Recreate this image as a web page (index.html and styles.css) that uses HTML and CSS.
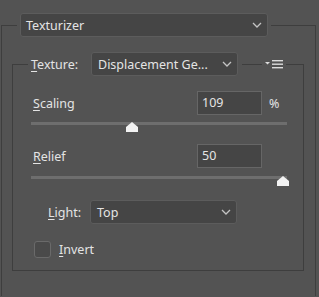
FILE: index.html
```html
<!DOCTYPE html>
<html lang="en">

<head>
    <meta charset="UTF-8">
    <meta name="viewport" content="width=device-width, initial-scale=1.0">
    <title>Texturizer</title>
    <link rel="stylesheet" href="styles.css">
</head>

<body>
    <fieldset class="group group-outer">
        <legend class="group-head head-outer">
            <div class="select select-filter">
                <span>Texturizer</span>
                <svg class="chevron" width="10" height="6" viewBox="0 0 10 6"><path d="M1 1 L5 5 L9 1" /></svg>
            </div>
        </legend>

        <fieldset class="group group-inner">
            <legend class="group-head head-inner">
                <label class="lbl lbl-texture"><u>T</u>exture:</label>
                <div class="select select-texture">
                    <span>Displacement Ge...</span>
                    <svg class="chevron" width="10" height="6" viewBox="0 0 10 6"><path d="M1 1 L5 5 L9 1" /></svg>
                </div>
                <span class="rule"></span>
                <svg class="menu-icon" width="18" height="9" viewBox="0 0 18 9">
                    <polygon points="0,2 5,2 2.5,4.5" />
                    <rect x="7" y="0" width="11" height="1.4" />
                    <rect x="7" y="3.5" width="11" height="1.4" />
                    <rect x="7" y="7" width="11" height="1.4" />
                </svg>
            </legend>

            <div class="field">
                <label class="lbl lbl-field"><u>S</u>caling</label>
                <div class="num">109</div>
                <span class="unit">%</span>
            </div>
            <div class="slider slider-scaling">
                <div class="track"></div>
                <svg class="thumb" style="left: 39.5%" width="12" height="10" viewBox="0 0 12 10"><polygon points="6,0 12,5 12,10 0,10 0,5" /></svg>
            </div>

            <div class="field field-relief">
                <label class="lbl lbl-field"><u>R</u>elief</label>
                <div class="num">50</div>
            </div>
            <div class="slider slider-relief">
                <div class="track"></div>
                <svg class="thumb" style="left: 98.4%" width="12" height="10" viewBox="0 0 12 10"><polygon points="6,0 12,5 12,10 0,10 0,5" /></svg>
            </div>

            <div class="field field-light">
                <label class="lbl lbl-light"><u>L</u>ight:</label>
                <div class="select select-light">
                    <span>Top</span>
                    <svg class="chevron" width="10" height="6" viewBox="0 0 10 6"><path d="M1 1 L5 5 L9 1" /></svg>
                </div>
            </div>

            <div class="check">
                <span class="box"></span>
                <label class="lbl"><u>I</u>nvert</label>
            </div>
        </fieldset>
    </fieldset>
</body>

</html>
```

FILE: styles.css
```css
html,
body {
    margin: 0;
    padding: 0;
    height: 100%;
    overflow: hidden;
    background: #535353;
}

body {
    font-family: "Noto Sans", "Open Sans", sans-serif;
    font-size: 12.5px;
    color: #e4e4e4;
}

u {
    text-decoration-thickness: 1px;
    text-underline-offset: 2px;
}

.group {
    margin: 0;
    border: 1px solid #3e3e3e;
    min-width: 0;
}

.group-head {
    display: flex;
    align-items: center;
    padding: 0 3px;
}

.group-outer {
    margin: 13px 3px 0 1px;
    padding: 15px 11px 25px 10px;
    border-bottom: none;
}

.head-outer {
    margin-left: 5px;
}

.group-inner {
    padding: 15px 16px 12px 18px;
}

.head-inner {
    margin-left: -3px;
}

.select {
    display: flex;
    align-items: center;
    justify-content: space-between;
    box-sizing: border-box;
    height: 24px;
    padding: 0 5px 0 6px;
    background: #454545;
    border: 1px solid #5c5c5c;
    border-radius: 3px;
}

.select-filter {
    width: 248px;
    padding-left: 5px;
}

.select-texture {
    width: 147px;
    margin-left: 10px;
}

.select-light {
    width: 147px;
}

.chevron {
    fill: none;
    stroke: #c4c4c4;
    stroke-width: 1.3;
}

.rule {
    width: 20px;
    height: 1px;
    margin: 0 3px 0 4px;
    background: #3e3e3e;
}

.menu-icon {
    fill: #dcdcdc;
}

.lbl {
    white-space: nowrap;
}

.lbl-texture {
    width: 50px;
}

.field {
    display: flex;
    align-items: center;
    height: 24px;
}

.lbl-field {
    width: 164px;
    padding-left: 2px;
}

.num {
    box-sizing: border-box;
    width: 65px;
    height: 24px;
    line-height: 22px;
    padding-left: 4px;
    background: #454545;
    border: 1px solid #666;
}

.unit {
    margin-left: 7px;
}

.slider {
    position: relative;
    height: 10px;
}

.track {
    height: 3px;
    margin-top: 4px;
    background: #6e6e6e;
}

.thumb {
    position: absolute;
    top: 0;
    margin-left: -6px;
    fill: #f2f2f2;
}

.slider-scaling {
    margin-top: 7px;
}

.field-relief {
    margin-top: 12px;
}

.slider-relief {
    margin-top: 8px;
}

.field-light {
    margin-top: 14px;
}

.lbl-light {
    width: 42px;
    padding-left: 17px;
}

.check {
    display: flex;
    align-items: center;
    gap: 8px;
    margin-top: 17px;
    padding-left: 3px;
}

.box {
    box-sizing: border-box;
    width: 17px;
    height: 17px;
    background: #4a4a4a;
    border: 1px solid #6a6a6a;
    border-radius: 3px;
}
```
